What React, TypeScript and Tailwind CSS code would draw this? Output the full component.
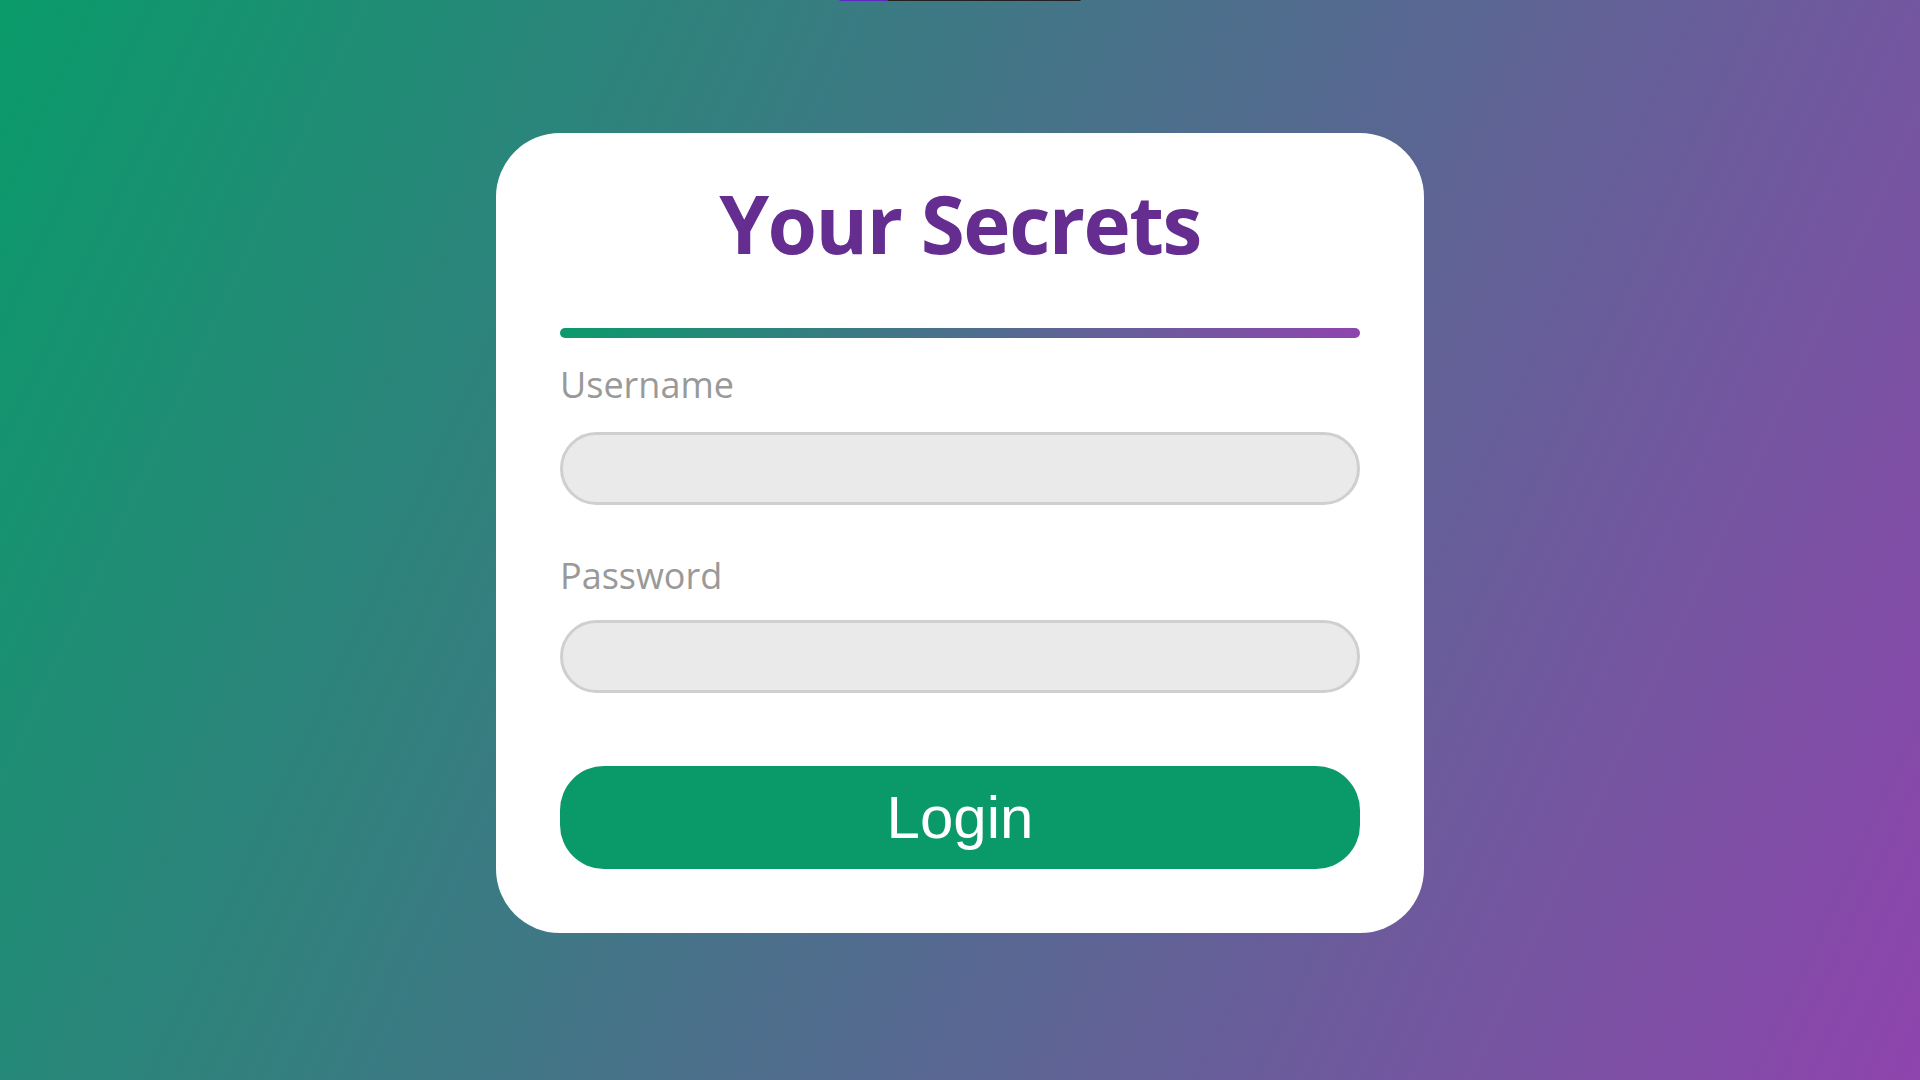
export default function App() {
  return (
    <div className="relative flex min-h-screen w-full items-center justify-center bg-[linear-gradient(115deg,#0a9b6a,#8e44ad)] pb-[14px] font-['Open_Sans','Noto_Sans',sans-serif]">
      {/* thin loading strip at the very top */}
      <div className="absolute left-1/2 top-0 flex h-px w-[241px] -translate-x-1/2">
        <div className="h-full w-[48px] bg-[#5b2bbf]" />
        <div className="h-full flex-1 bg-[#222222]" />
      </div>

      <div className="flex w-[928px] flex-col rounded-[64px] bg-white px-16 pb-16 pt-[50px]">
        <h1 className="text-center text-[80px] font-bold leading-none tracking-[-1.5px] text-[#652d90]">
          Your Secrets
        </h1>

        <div className="mt-[65px] h-[10px] w-full rounded-full bg-[linear-gradient(90deg,#0b9a6c,#8e44ad)]" />

        <label className="mt-[29px] text-[36px] leading-none text-[#999999]">Username</label>
        <input
          type="text"
          className="mt-[29px] h-[73px] w-full rounded-full border-[3px] border-[#cfcfcf] bg-[#eaeaea] px-6 text-2xl outline-none"
        />

        <label className="mt-[53px] text-[36px] leading-none text-[#999999]">Password</label>
        <input
          type="password"
          className="mt-[26px] h-[73px] w-full rounded-full border-[3px] border-[#cfcfcf] bg-[#eaeaea] px-6 text-2xl outline-none"
        />

        <button className="mt-[73px] h-[103px] w-full rounded-[44px] bg-[#0a9a6a] font-['Liberation_Sans',Arial,sans-serif] text-[60px] text-white">
          Login
        </button>
      </div>
    </div>
  )
}
